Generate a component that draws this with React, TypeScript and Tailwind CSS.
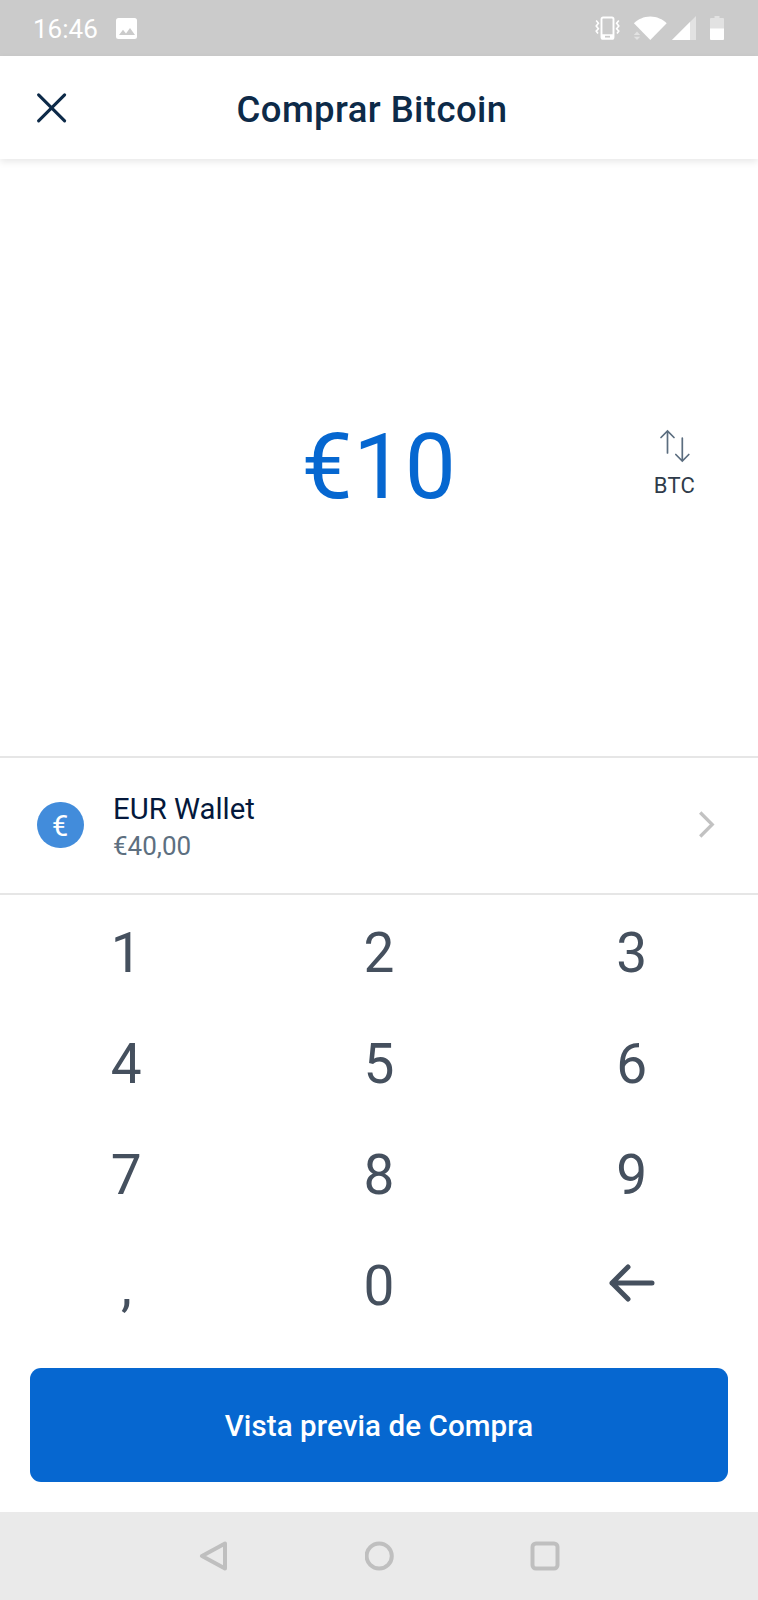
import React from "react";

const StatusBar: React.FC = () => (
  <div className="flex h-14 shrink-0 items-center justify-between bg-[#cbcbcb] pl-[33px] pr-[34px] text-white">
    <div className="flex items-center">
      <span className="pt-[2px] text-[26px] leading-[30px]">16:46</span>
      <svg width="21" height="21" viewBox="0 0 21 21" className="ml-[18px]">
        <rect width="21" height="21" rx="2.5" fill="#fff" />
        <path d="M3 17l4-5.2 3 3.6 4-5.4 5 7z" fill="#cbcbcb" />
      </svg>
    </div>

    <div className="flex items-center">
      {/* Vibrate */}
      <svg width="25" height="24" viewBox="0 0 25 24" fill="none" stroke="#fff">
        <rect x="6.5" y="1.5" width="12" height="21.4" rx="1.6" strokeWidth="1.9" />
        <path d="M6.5 20.5h12" strokeWidth="4.5" />
        <path d="M10 20.7h5" stroke="#cbcbcb" strokeWidth="1.7" />
        <path
          d="M1.2 4.6l2.2 2.6-2.2 2.8 2.2 2.7-2.2 2.4 1.8 2.4M23.8 4.6l-2.2 2.6 2.2 2.8-2.2 2.7 2.2 2.4-1.8 2.4"
          strokeWidth="1.6"
        />
      </svg>
      {/* Wifi */}
      <svg width="34" height="24" viewBox="0 0 34 24" className="ml-[13px]">
        <path d="M17.3 24L.9 7.2C5 3.4 10.8.6 17.3.6s12.300 2.800 16.400 6.600z" fill="#fff" />
        <path d="M.8 19L4 15.4 7.2 19zM.8 20.7h6.400L4 24z" fill="#e2e2e2" />
      </svg>
      {/* Signal */}
      <svg width="24" height="24" viewBox="0 0 24 24" className="ml-[5px]">
        <path d="M0 24L24 0v24z" fill="#e2e2e2" />
        <path d="M0 24L18 6v18z" fill="#fff" />
      </svg>
      {/* Battery */}
      <svg width="14" height="24" viewBox="0 0 14 24" className="ml-[14px]">
        <path d="M4.5 0h5v2H13a1 1 0 0 1 1 1v10H0V3a1 1 0 0 1 1-1h3.500z" fill="#e2e2e2" />
        <path d="M0 12.500h14V23a1 1 0 0 1-1 1H1a1 1 0 0 1-1-1z" fill="#fff" />
      </svg>
    </div>
  </div>
);

const Header: React.FC = () => (
  <header className="z-10 grid h-[103px] shrink-0 grid-cols-[90px_1fr_104px] items-center bg-white shadow-[0_3px_7px_rgba(0,0,0,0.09)]">
    <button aria-label="Cerrar" className="pl-9">
      <svg width="32" height="32" viewBox="0 0 32 32" fill="none" stroke="#0d2a48" strokeWidth="3.1" strokeLinecap="round">
        <path d="M2.6 2.9l26 26M28.6 2.9l-26 26" />
      </svg>
    </button>
    <h1 className="pt-[4px] text-center text-[36.5px] font-medium leading-[44px] tracking-[0.42px] text-[#0d2a48]">
      Comprar Bitcoin
    </h1>
  </header>
);

const Amount: React.FC = () => (
  <section className="grid h-[597px] shrink-0 grid-cols-[168px_1fr_168px] items-center">
    <div className="col-start-2 pt-[19px] text-center text-[91px] leading-[110px] tracking-[0.5px] text-[#0667d0]">
      €10
    </div>
    <button className="flex flex-col items-center pl-[1px] pt-[12px]">
      <svg width="32" height="34" viewBox="0 0 32 34" fill="none" stroke="#5b6d7f" strokeWidth="1.7" strokeLinecap="round">
        <path d="M8.5 24V2M2 8.5L8.500 2l6.500 6.500M23.300 9v23M16.800 25.500l6.500 6.500 6.500-6.500" />
      </svg>
      <span className="mt-[10px] text-[22px] leading-[26px] tracking-[0.3px] text-[#2f3b4a]">BTC</span>
    </button>
  </section>
);

const WalletRow: React.FC = () => (
  <button className="flex h-[139px] shrink-0 items-center border-y-2 border-[#e6e6e6] pl-[37px] pr-[43px] text-left">
    <span className="mb-[1px] flex h-[46.5px] w-[46.5px] items-center justify-center rounded-full bg-[#428cdb] pt-[3px] text-[29px] leading-none text-white">
      €
    </span>
    <span className="ml-[29.5px] flex flex-1 flex-col pt-[3px]">
      <span className="text-[29.3px] leading-[38px] text-[#04183b]">EUR Wallet</span>
      <span className="text-[26px] leading-[37px] text-[#5d6f80]">€40,00</span>
    </span>
    <svg width="16" height="27" viewBox="0 0 16 27" fill="none" stroke="#c2c2c2" strokeWidth="3.3" className="mb-[2px]">
      <path d="M1.2 1.5l12 12-12 12" />
    </svg>
  </button>
);

const keys = ["1", "2", "3", "4", "5", "6", "7", "8", "9", ",", "0", "back"];

const Keypad: React.FC = () => (
  <div className="grid h-[446px] shrink-0 grid-cols-3 grid-rows-4 pt-[2px] text-[55px] text-[#45505e]">
    {keys.map((key) => (
      <button key={key} className="flex items-center justify-center leading-[56px]">
        {key === "back" ? (
          <svg width="46" height="38" viewBox="0 0 46 38" fill="none" stroke="currentColor" strokeWidth="5" strokeLinecap="round" strokeLinejoin="round" className="mb-[5px]">
            <path d="M43 19H3M19 3L3 19l16 16" />
          </svg>
        ) : (
          key
        )}
      </button>
    ))}
  </div>
);

const NavBar: React.FC = () => (
  <nav className="flex h-[88px] shrink-0 items-center justify-between bg-[#eaeaea] pl-[199px] pr-[198px]">
    <svg width="30" height="30" viewBox="0 0 30 30" fill="none" stroke="#bfbfbf" strokeWidth="4" strokeLinejoin="round">
      <path d="M3 15L26 2.500v25z" />
    </svg>
    <svg width="30" height="30" viewBox="0 0 30 30" fill="none" stroke="#bfbfbf" strokeWidth="4">
      <circle cx="14.2" cy="15" r="12.6" />
    </svg>
    <svg width="30" height="30" viewBox="0 0 30 30" fill="none" stroke="#bfbfbf" strokeWidth="4">
      <rect x="2.5" y="2.5" width="25" height="25" rx="3.5" />
    </svg>
  </nav>
);

export default function App() {
  return (
    <div className="flex h-[1600px] w-[758px] flex-col overflow-hidden bg-white font-[Roboto,sans-serif]">
      <StatusBar />
      <Header />
      <Amount />
      <WalletRow />
      <Keypad />
      <div className="flex-1 px-[30px] pt-[27px]">
        <button className="h-[114px] w-full rounded-[11px] bg-[#0667d0] pt-[3px] text-[29.5px] font-medium tracking-[0.1px] text-white">
          Vista previa de Compra
        </button>
      </div>
      <NavBar />
    </div>
  );
}
